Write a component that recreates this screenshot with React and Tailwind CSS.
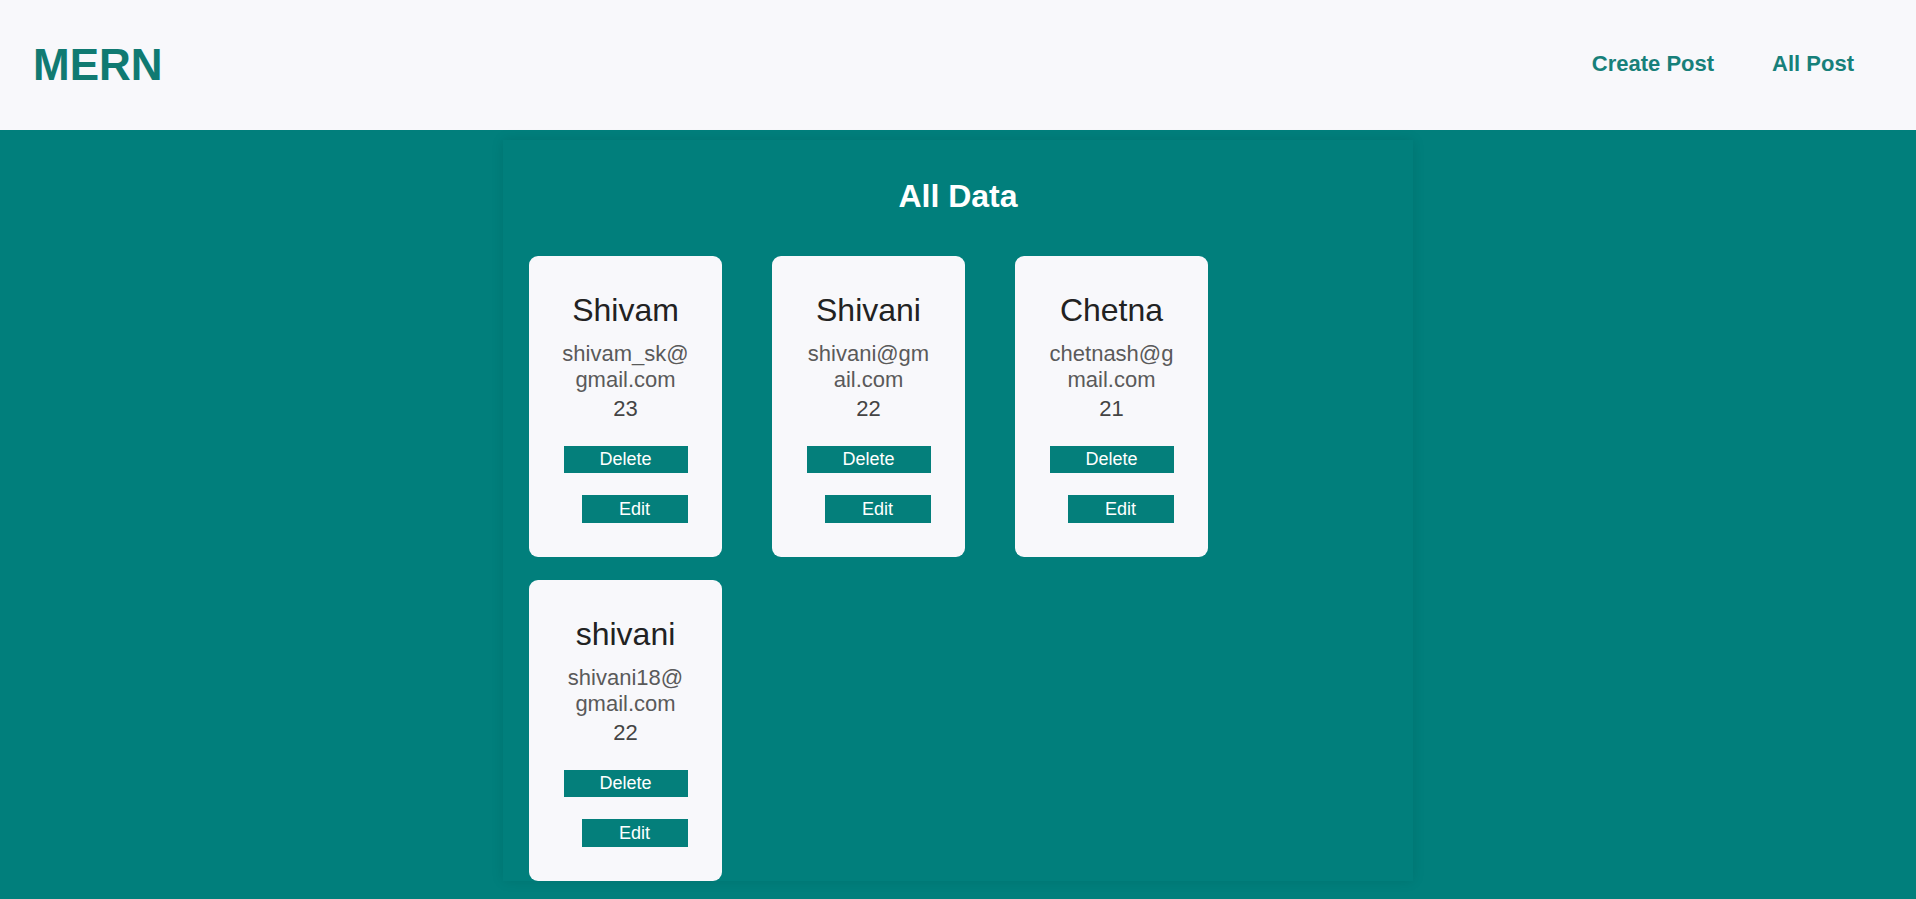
const USERS = [
  { name: 'Shivam', email: 'shivam_sk@gmail.com', age: 23 },
  { name: 'Shivani', email: 'shivani@gmail.com', age: 22 },
  { name: 'Chetna', email: 'chetnash@gmail.com', age: 21 },
  { name: 'shivani', email: 'shivani18@gmail.com', age: 22 },
]

function UserCard({ user }) {
  return (
    <div className="w-[193px] rounded-[9px] bg-[#f8f8fb] pt-[36px] pb-[34px] flex flex-col items-center text-center">
      <h1 className="text-[32px] leading-[36px] text-[#222]">{user.name}</h1>
      <p className="mt-[13px] w-[127px] break-all text-[22px] leading-[26px] text-[#5a5a5a]">{user.email}</p>
      <p className="mt-[3px] text-[22px] leading-[26px] text-[#444]">{user.age}</p>
      <div className="mt-[24px] w-[124px] flex flex-col">
        <button className="h-[27px] w-full bg-[#047f7b] text-white text-[18px] leading-[27px]">Delete</button>
        <button className="mt-[22px] h-[28px] w-[106px] self-end bg-[#047f7b] text-white text-[18px] leading-[28px]">Edit</button>
      </div>
    </div>
  )
}

export default function App() {
  return (
    <div className="min-h-screen bg-[#017f7c]" style={{ fontFamily: '"Liberation Sans", Arial, sans-serif' }}>
      {/* Header */}
      <header className="h-[130px] bg-[#f8f8fb] pl-[33px] pr-[62px] flex items-center justify-between">
        <a className="text-[44px] font-bold text-[#107a72] leading-none">MERN</a>
        <nav className="mb-[4px] flex items-center gap-[58px] text-[22px] font-bold text-[#17807a]">
          <a>Create Post</a>
          <a>All Post</a>
        </nav>
      </header>

      {/* Content */}
      <main className="mx-auto mt-[10px] w-[910px] pt-[38px] shadow-[0_0_12px_rgba(0,0,0,0.10)]">
        <h2 className="text-center text-[32px] leading-[37px] font-bold text-white">All Data</h2>
        <div className="mt-[41px] pl-[26px] flex flex-wrap gap-x-[50px] gap-y-[23px]">
          {USERS.map((u, i) => (
            <UserCard key={i} user={u} />
          ))}
        </div>
      </main>
    </div>
  )
}
